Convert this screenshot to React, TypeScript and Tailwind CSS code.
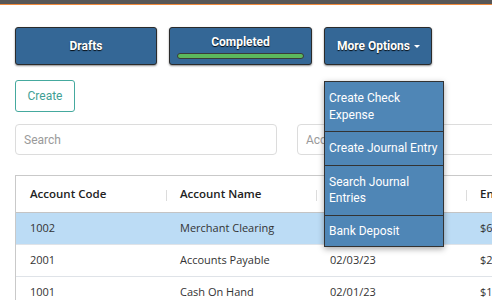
import React from "react";

const rows = [
  { code: "1002", name: "Merchant Clearing", date: "", amt: "$6", sel: true },
  { code: "2001", name: "Accounts Payable", date: "02/03/23", amt: "$2", sel: false },
  { code: "1001", name: "Cash On Hand", date: "02/01/23", amt: "$1", sel: false },
];

const btn =
  "h-[38px] rounded-[3px] border border-[#2b2b2b] bg-[#346796] text-white font-bold text-[12px] shadow-[0_1px_2px_rgba(0,0,0,0.45)] [text-shadow:0_1px_1px_rgba(0,0,0,0.9)] flex items-center justify-center";

export default function App() {
  return (
    <div
      className="relative w-[492px] h-[300px] overflow-hidden bg-white"
      style={{ fontFamily: "Roboto, 'Liberation Sans', sans-serif" }}
    >
      <div className="h-[4px] bg-[#575757]" />
      <div className="h-[1px] bg-[#f08a3c]" />
      <div className="px-[15px]">
        <div className="mt-[22px] flex gap-[12px]">
          <div className={`${btn} w-[142px]`}>Drafts</div>
          <div className={`${btn} w-[143px] flex-col justify-start pt-[5px] px-[7px]`}>
            <span className="leading-[18px]">Completed</span>
            <div className="mt-[2px] h-[6px] w-full rounded-full border border-[#3a3a3a] bg-[#5cb85c]" />
          </div>
          <div className={`${btn} w-[108px] justify-start pl-[12px]`}>
            <span>More Options</span>
            <span className="ml-[4px] mt-[1px] w-0 h-0 border-l-[3px] border-r-[3px] border-t-[3px] border-l-transparent border-r-transparent border-t-white" />
          </div>
        </div>

        <div className="mt-[15px] flex">
          <div className="h-[32px] w-[60px] rounded-[3px] border border-[#45a99e] text-[#3f9f95] text-[12px] flex items-center justify-center">
            Create
          </div>
        </div>

        <div className="mt-[12px] flex gap-[20px]">
          <div className="h-[31px] w-[262px] shrink-0 rounded-[4px] border border-[#dcdcdc] flex items-center pl-[8px] text-[12px] text-[#9a9a9a]">
            Search
          </div>
          <div className="h-[31px] w-[300px] shrink-0 rounded-[4px] border border-[#dcdcdc] flex items-center pl-[8px] text-[12px] text-[#9a9a9a]">
            Account
          </div>
        </div>

        <div
          className="mt-[20px] w-[600px] border-t border-l border-[#c9c9c9] text-[11px]"
          style={{ fontFamily: "'Open Sans', 'Noto Sans', sans-serif" }}
        >
          <div className="flex h-[37px] items-center border-b border-[#c4c4c4] font-semibold text-[11.5px] text-[#222]">
            {["Account Code", "Account Name", "Date", "Entry"].map((h, i) => (
              <div key={h} className="relative w-[150px] shrink-0 pl-[14px] flex items-center h-full">
                {i > 0 && <div className="absolute left-0 top-[14px] h-[11px] w-px bg-[#dcdcdc]" />}
                {h}
              </div>
            ))}
          </div>
          {rows.map((r) => (
            <div
              key={r.code}
              className={`flex h-[32px] items-center border-b border-[#dfe3e8] text-[#333] ${r.sel ? "bg-[#bcdcf5]" : "bg-white"}`}
            >
              <div className="w-[150px] shrink-0 pl-[14px]">{r.code}</div>
              <div className="w-[150px] shrink-0 pl-[14px]">{r.name}</div>
              <div className="w-[150px] shrink-0 pl-[14px]">{r.date}</div>
              <div className="w-[150px] shrink-0 pl-[14px]">{r.amt}</div>
            </div>
          ))}
        </div>
      </div>

      <div className="absolute left-[324px] top-[81px] w-[120px] border border-[#333] bg-[#4f86b6] text-white text-[12px] leading-[16.5px] shadow-[0_2px_6px_rgba(0,0,0,0.35)]">
        <div className="px-[4px] py-[8px] border-b border-[#333]">Create Check<br />Expense</div>
        <div className="px-[4px] py-[8px] border-b border-[#333]">Create Journal Entry</div>
        <div className="px-[4px] py-[8px] border-b border-[#333]">Search Journal<br />Entries</div>
        <div className="px-[4px] py-[7px]">Bank Deposit</div>
      </div>
    </div>
  );
}
